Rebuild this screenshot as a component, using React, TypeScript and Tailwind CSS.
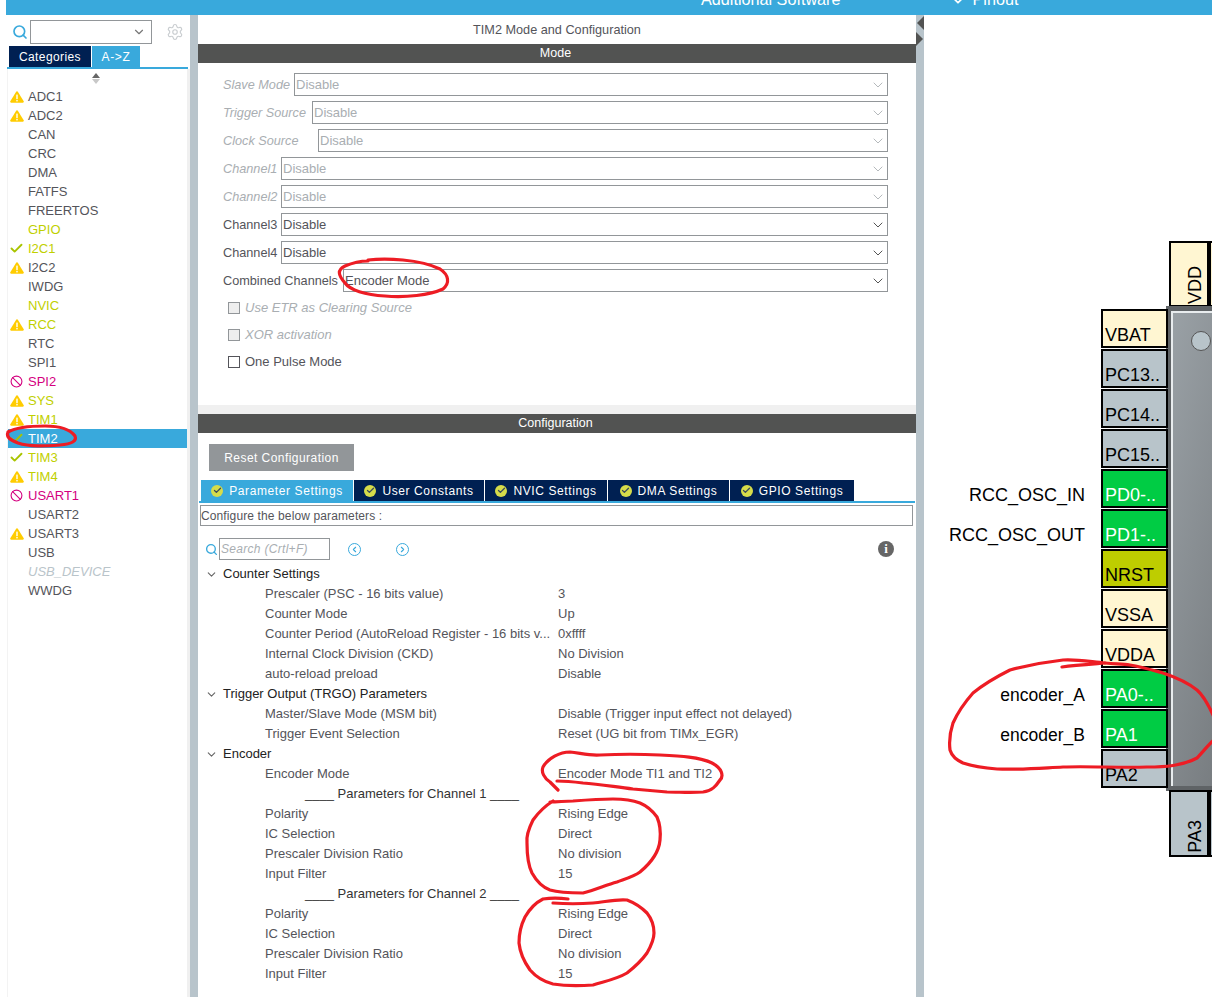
import React from 'react';
import { ChevronDown, ChevronLeft, ChevronRight, Search, Settings, Ban, Check } from 'lucide-react';

type Status = 'warn' | 'ok' | 'ban' | null;

const peripherals: { name: string; status: Status; color: string }[] = [
  { name: 'ADC1', status: 'warn', color: 'text-[#54545a]' },
  { name: 'ADC2', status: 'warn', color: 'text-[#54545a]' },
  { name: 'CAN', status: null, color: 'text-[#54545a]' },
  { name: 'CRC', status: null, color: 'text-[#54545a]' },
  { name: 'DMA', status: null, color: 'text-[#54545a]' },
  { name: 'FATFS', status: null, color: 'text-[#54545a]' },
  { name: 'FREERTOS', status: null, color: 'text-[#54545a]' },
  { name: 'GPIO', status: null, color: 'text-[#bfd000]' },
  { name: 'I2C1', status: 'ok', color: 'text-[#bfd000]' },
  { name: 'I2C2', status: 'warn', color: 'text-[#54545a]' },
  { name: 'IWDG', status: null, color: 'text-[#54545a]' },
  { name: 'NVIC', status: null, color: 'text-[#bfd000]' },
  { name: 'RCC', status: 'warn', color: 'text-[#bfd000]' },
  { name: 'RTC', status: null, color: 'text-[#54545a]' },
  { name: 'SPI1', status: null, color: 'text-[#54545a]' },
  { name: 'SPI2', status: 'ban', color: 'text-[#d4007f]' },
  { name: 'SYS', status: 'warn', color: 'text-[#bfd000]' },
  { name: 'TIM1', status: 'warn', color: 'text-[#bfd000]' },
  { name: 'TIM2', status: 'ok', color: 'text-white' },
  { name: 'TIM3', status: 'ok', color: 'text-[#bfd000]' },
  { name: 'TIM4', status: 'warn', color: 'text-[#bfd000]' },
  { name: 'USART1', status: 'ban', color: 'text-[#d4007f]' },
  { name: 'USART2', status: null, color: 'text-[#54545a]' },
  { name: 'USART3', status: 'warn', color: 'text-[#54545a]' },
  { name: 'USB', status: null, color: 'text-[#54545a]' },
  { name: 'USB_DEVICE', status: null, color: 'text-[#b9c4ca] italic' },
  { name: 'WWDG', status: null, color: 'text-[#54545a]' },
];

const modeRows = [
  { label: 'Slave Mode', value: 'Disable', width: 'w-[71px]', off: true },
  { label: 'Trigger Source', value: 'Disable', width: 'w-[89px]', off: true },
  { label: 'Clock Source', value: 'Disable', width: 'w-[95px]', off: true },
  { label: 'Channel1', value: 'Disable', width: 'w-[58px]', off: true },
  { label: 'Channel2', value: 'Disable', width: 'w-[58px]', off: true },
  { label: 'Channel3', value: 'Disable', width: 'w-[58px]', off: false },
  { label: 'Channel4', value: 'Disable', width: 'w-[58px]', off: false },
  { label: 'Combined Channels', value: 'Encoder Mode', width: 'w-[120px]', off: false },
];

const tabs = [
  { label: 'Parameter Settings', width: 'w-[152px]', active: true },
  { label: 'User Constants', width: 'w-[130px]', active: false },
  { label: 'NVIC Settings', width: 'w-[122px]', active: false },
  { label: 'DMA Settings', width: 'w-[121px]', active: false },
  { label: 'GPIO Settings', width: 'w-[124px]', active: false },
];

const tree: { kind: 'group' | 'item' | 'sub'; label: string; value?: string }[] = [
  { kind: 'group', label: 'Counter Settings' },
  { kind: 'item', label: 'Prescaler (PSC - 16 bits value)', value: '3' },
  { kind: 'item', label: 'Counter Mode', value: 'Up' },
  { kind: 'item', label: 'Counter Period (AutoReload Register - 16 bits v...', value: '0xffff' },
  { kind: 'item', label: 'Internal Clock Division (CKD)', value: 'No Division' },
  { kind: 'item', label: 'auto-reload preload', value: 'Disable' },
  { kind: 'group', label: 'Trigger Output (TRGO) Parameters' },
  { kind: 'item', label: 'Master/Slave Mode (MSM bit)', value: 'Disable (Trigger input effect not delayed)' },
  { kind: 'item', label: 'Trigger Event Selection', value: 'Reset (UG bit from TIMx_EGR)' },
  { kind: 'group', label: 'Encoder' },
  { kind: 'item', label: 'Encoder Mode', value: 'Encoder Mode TI1 and TI2' },
  { kind: 'sub', label: '____ Parameters for Channel 1 ____' },
  { kind: 'item', label: 'Polarity', value: 'Rising Edge' },
  { kind: 'item', label: 'IC Selection', value: 'Direct' },
  { kind: 'item', label: 'Prescaler Division Ratio', value: 'No division' },
  { kind: 'item', label: 'Input Filter', value: '15' },
  { kind: 'sub', label: '____ Parameters for Channel 2 ____' },
  { kind: 'item', label: 'Polarity', value: 'Rising Edge' },
  { kind: 'item', label: 'IC Selection', value: 'Direct' },
  { kind: 'item', label: 'Prescaler Division Ratio', value: 'No division' },
  { kind: 'item', label: 'Input Filter', value: '15' },
];

const pins = [
  { label: 'VBAT', bg: 'bg-[#fff6d2]', text: 'text-black', net: '', netClass: '' },
  { label: 'PC13..', bg: 'bg-[#b8c4ca]', text: 'text-black', net: '', netClass: '' },
  { label: 'PC14..', bg: 'bg-[#b8c4ca]', text: 'text-black', net: '', netClass: '' },
  { label: 'PC15..', bg: 'bg-[#b8c4ca]', text: 'text-black', net: '', netClass: '' },
  { label: 'PD0-..', bg: 'bg-[#00cc44]', text: 'text-white', net: 'RCC_OSC_IN', netClass: 'text-[18px] -mt-px' },
  { label: 'PD1-..', bg: 'bg-[#00cc44]', text: 'text-white', net: 'RCC_OSC_OUT', netClass: 'text-[18px] -mt-px' },
  { label: 'NRST', bg: 'bg-[#becd00]', text: 'text-black', net: '', netClass: '' },
  { label: 'VSSA', bg: 'bg-[#fff6d2]', text: 'text-black', net: '', netClass: '' },
  { label: 'VDDA', bg: 'bg-[#fff6d2]', text: 'text-black', net: '', netClass: '' },
  { label: 'PA0-..', bg: 'bg-[#00cc44]', text: 'text-white', net: 'encoder_A', netClass: 'text-[17.5px]' },
  { label: 'PA1', bg: 'bg-[#00cc44]', text: 'text-white', net: 'encoder_B', netClass: 'text-[17.5px]' },
  { label: 'PA2', bg: 'bg-[#b8c4ca]', text: 'text-black', net: '', netClass: '' },
];

const WarnIcon = () => (
  <svg width="14" height="12" viewBox="0 0 14 12">
    <path d="M7 .3c.5 0 .8.3 1 .6l5.7 9.4c.4.7 0 1.4-.8 1.4H1.1c-.8 0-1.2-.7-.8-1.4L6 .9c.2-.3.5-.6 1-.6z" fill="#ffcc00" />
    <rect x="6.3" y="3.6" width="1.4" height="4.6" fill="#fff" />
    <rect x="6.3" y="9" width="1.4" height="1.4" fill="#fff" />
  </svg>
);

const StatusIcon = ({ status }: { status: Status }) => {
  if (status === 'warn') return <WarnIcon />;
  if (status === 'ok') return <Check size={15} strokeWidth={3} className="text-[#a9c400]" />;
  if (status === 'ban') return <Ban size={13} strokeWidth={2} className="text-[#d4007f]" />;
  return null;
};

const TabCheck = () => (
  <span className="w-[12px] h-[12px] rounded-full bg-[#d6dc4a] flex items-center justify-center shrink-0">
    <Check size={9} strokeWidth={3.5} className="text-[#3a4a5a]" />
  </span>
);

const Sidebar = () => (
  <aside className="w-[184px] shrink-0 bg-white flex flex-col h-full">
    <div className="h-[31px] flex items-center pt-[2px]">
      <Search size={16} strokeWidth={2.5} className="ml-[6px] text-[#39a9dc] shrink-0" />
      <div className="ml-[2px] w-[122px] h-[24px] border border-[#929699] flex items-center justify-end pr-[5px]">
        <ChevronDown size={14} className="text-[#777]" />
      </div>
      <Settings size={18} strokeWidth={1.5} className="ml-[14px] text-[#c9cdd0]" />
    </div>
    <div className="flex h-[21px] pl-[3px] gap-px">
      <div className="w-[82px] bg-[#002052] text-white text-[12px] tracking-[0.4px] flex items-center justify-center">Categories</div>
      <div className="w-[48px] bg-[#39a9dc] text-white text-[12px] tracking-[0.7px] flex items-center justify-center">{'A->Z'}</div>
    </div>
    <div className="h-[2px] ml-[1px] mr-[2px] bg-[#39a9dc]" />
    <div className="flex-1 ml-px mr-0 border-l border-l-[#f3f3f3] border-r-[3px] border-r-[#f0f0f0] flex flex-col min-h-0">
      <div className="h-[16px] flex flex-col items-center justify-center gap-[1px] pr-[3px] pt-[2px]">
        <span className="w-0 h-0 border-x-[4px] border-x-transparent border-b-[5px] border-b-[#666]" />
        <span className="w-0 h-0 border-x-[4px] border-x-transparent border-t-[5px] border-t-[#c8c8c8]" />
      </div>
      <ul className="pt-[2px]">
        {peripherals.map((p) => (
          <li
            key={p.name}
            className={`h-[19px] flex items-center text-[13px] ${p.color} ${p.name === 'TIM2' ? 'bg-[#39a9dc]' : ''}`}
          >
            <span className="w-[20px] pr-[3px] flex justify-center shrink-0">
              <StatusIcon status={p.status} />
            </span>
            <span>{p.name}</span>
          </li>
        ))}
      </ul>
    </div>
  </aside>
);

const ModeSection = () => (
  <section className="h-[342px] pt-[10px] pl-[25px] pr-[28px] text-[13px]">
    <div className="flex flex-col gap-[5px]">
      {modeRows.map((r) => (
        <div key={r.label} className="flex items-center h-[23px]">
          <span className={`${r.width} shrink-0 whitespace-nowrap pt-[2px] text-[12.7px] ${r.off ? 'italic text-[#a9aeb2]' : 'text-[#54545a]'}`}>{r.label}</span>
          <div className="flex-1 h-[23px] border border-[#929699] pl-[1px] flex items-center justify-between pr-[1px]">
            <span className={r.off ? 'text-[#a9aeb2]' : 'text-[#54545a]'}>{r.value}</span>
            <ChevronDown size={16} strokeWidth={1.5} className={r.off ? 'text-[#b5b9bc]' : 'text-[#555]'} />
          </div>
        </div>
      ))}
    </div>
    <div className="pl-[5px] pt-[2px] flex flex-col">
      <label className="h-[27px] flex items-center gap-[5px] italic text-[#a9aeb2]">
        <span className="w-[12px] h-[12px] border border-[#929699] bg-[#eeeeee]" />Use ETR as Clearing Source
      </label>
      <label className="h-[27px] flex items-center gap-[5px] italic text-[#a9aeb2]">
        <span className="w-[12px] h-[12px] border border-[#929699] bg-[#eeeeee]" />XOR activation
      </label>
      <label className="h-[27px] flex items-center gap-[5px] text-[#54545a]">
        <span className="w-[12px] h-[12px] border border-[#54545a] bg-white" />One Pulse Mode
      </label>
    </div>
  </section>
);

const ConfigSection = () => (
  <section className="flex-1 min-h-0 overflow-hidden text-[13px]">
    <div className="pt-[11px] pl-[11px]">
      <button className="w-[145px] h-[27px] bg-[#929699] text-white text-[12px] tracking-[0.45px]">Reset Configuration</button>
    </div>
    <div className="flex mt-[9px] pl-[3px] gap-px h-[21px]">
      {tabs.map((t) => (
        <div
          key={t.label}
          className={`${t.width} ${t.active ? 'bg-[#39a9dc]' : 'bg-[#002052]'} text-white text-[12px] tracking-[0.6px] flex items-center justify-center gap-[6px]`}
        >
          <TabCheck />
          {t.label}
        </div>
      ))}
    </div>
    <div className="h-[2px] ml-px mr-px bg-[#39a9dc]" />
    <div className="mt-[2px] ml-[2px] mr-[3px] h-[21px] border border-[#929699] flex items-center text-[12px] tracking-[0.12px] text-[#54545a]">
      Configure the below parameters :
    </div>
    <div className="mt-[12px] h-[22px] flex items-center pl-[7px]">
      <Search size={13} strokeWidth={2.5} className="text-[#39a9dc] shrink-0" />
      <div className="w-[111px] h-[22px] ml-px border border-[#929699] italic text-[#a9aeb2] pl-[1px] flex items-center text-[12px] tracking-[0.3px]">Search (Crtl+F)</div>
      <span className="ml-[18px] w-[13px] h-[13px] rounded-full border border-[#39a9dc] flex items-center justify-center">
        <ChevronLeft size={9} strokeWidth={3} className="text-[#39a9dc]" />
      </span>
      <span className="ml-[35px] w-[13px] h-[13px] rounded-full border border-[#39a9dc] flex items-center justify-center">
        <ChevronRight size={9} strokeWidth={3} className="text-[#39a9dc]" />
      </span>
      <span className="ml-[469px] w-[16px] h-[16px] rounded-full bg-[#666] text-white text-[13px] font-bold flex items-center justify-center font-['Liberation_Serif',serif]">i</span>
    </div>
    <div className="mt-[4px]">
      {tree.map((row, i) => (
        <div key={i} className="h-[20px] flex items-center whitespace-nowrap">
          {row.kind === 'group' && (
            <>
              <ChevronDown size={13} className="ml-[7px] w-[13px] text-[#666] shrink-0" />
              <span className="ml-[5px] text-[#222]">{row.label}</span>
            </>
          )}
          {row.kind === 'item' && (
            <>
              <span className="ml-[67px] w-[293px] shrink-0 text-[#54545a]">{row.label}</span>
              <span className="text-[#54545a]">{row.value}</span>
            </>
          )}
          {row.kind === 'sub' && <span className="ml-[107px] text-[#333]">{row.label}</span>}
        </div>
      ))}
    </div>
  </section>
);

const PinCanvas = () => (
  <div className="relative flex-1 bg-white overflow-hidden font-['Liberation_Sans',sans-serif] text-[18px] leading-none">
    {/* top pins */}
    <div className="absolute left-[245px] top-[226px] w-[40px] h-[66px] border-[2px] border-black bg-[#fff6d2] flex justify-end items-end pb-[1px] pr-[3px]">
      <span className="[writing-mode:vertical-rl] rotate-180 text-black">VDD</span>
    </div>
    <div className="absolute left-[285px] top-[226px] w-[40px] h-[66px] border-[2px] border-black bg-[#fff6d2]" />
    {/* chip body */}
    <div className="absolute left-[242px] top-[291px] w-[120px] h-[485px] border-[5px] border-[#5f6366] bg-gradient-to-br from-[#9aa1a6] to-[#6a6e71]">
      <div className="h-full border-l-[2px] border-t-[2px] border-[#e8ecee]">
        <div className="ml-[18px] mt-[18px] w-[20px] h-[20px] rounded-full bg-[#b8c4ca] border border-[#555]" />
      </div>
    </div>
    {/* left pins */}
    {pins.map((p, i) => (
      <div
        key={p.label}
        style={{ top: 294 + i * 40 }}
        className={`absolute left-[177px] w-[67px] h-[39px] border-[2px] border-black ${p.bg} ${p.text} flex items-end pl-[2px] pb-[2px] whitespace-nowrap`}
      >
        {p.label}
      </div>
    ))}
    {pins.map((p, i) =>
      p.net ? (
        <div
          key={p.net}
          style={{ top: 294 + i * 40 + 18 }}
          className={`absolute right-[127px] text-black ${p.netClass} whitespace-nowrap`}
        >
          {p.net}
        </div>
      ) : null,
    )}
    {/* bottom pins */}
    <div className="absolute left-[245px] top-[775px] w-[40px] h-[67px] border-[2px] border-black bg-[#b8c4ca] flex justify-end items-end pb-[2px] pr-[3px]">
      <span className="[writing-mode:vertical-rl] rotate-180 text-black">PA3</span>
    </div>
    <div className="absolute left-[285px] top-[775px] w-[40px] h-[67px] border-[2px] border-black bg-[#b8c4ca]" />
  </div>
);

// hand drawn red marks on top of the screenshot
const Scribbles = () => (
  <svg className="absolute inset-0 pointer-events-none" width="1212" height="997" fill="none" stroke="#ed1c24" strokeWidth="3.2" strokeLinecap="round" strokeLinejoin="round">
    <path d="M8 432C15 428 28 426 45 426C60 426 70 429 75 436C77 441 72 444 60 445C45 446 30 447 18 443C10 440 6 437 8 432" />
    <path d="M368 260C385 258 420 259 440 269C449 275 450 283 443 289C430 295 405 298 385 296C365 295 350 290 345 283C338 275 337 270 345 266C352 263 360 261 368 261" />
    <path d="M558 790L550 782C544 778 541 772 543 767C548 758 560 752 570 752C580 753 590 756 600 755C620 754 640 754 660 755C680 756 700 757 712 763C722 768 724 776 720 780C716 786 712 791 703 792C690 793 680 792 667 792C655 791 645 790 633 789C615 787 600 784 583 783C575 782 565 781 557 781" />
    <path d="M553 801C545 806 538 813 533 820C528 830 526 836 527 843C527 855 528 865 532 873C537 882 542 887 550 890C560 893 572 893 583 893C595 890 606 885 617 882C625 879 633 877 640 872C652 862 659 852 660 840C661 830 660 824 657 817C652 810 647 806 640 803C632 800 622 799 613 799C600 799 586 800 573 801C565 801 558 802 550 802" />
    <path d="M568 899C560 898 550 898 543 899C535 903 529 910 525 917C521 925 519 934 519 943C520 953 525 963 530 970C537 978 545 982 553 984C565 986 580 986 593 985C606 981 617 979 627 973C636 966 642 960 647 953C651 946 654 940 654 933C654 925 651 918 647 913C641 907 635 903 627 900C615 899 605 902 593 903C580 904 566 904 553 903" />
    <path d="M1062 667C1075 665 1092 664 1105 663C1092 662 1077 659 1063 660C1045 662 1025 666 1010 670C998 676 984 684 973 693C965 702 958 712 953 723C950 732 949 742 950 750C952 757 957 760 963 763C975 767 985 768 997 769C1020 770 1042 768 1063 767C1090 766 1120 768 1147 767C1165 767 1182 766 1197 758C1203 752 1208 745 1214 740" />
    <path d="M1105 663C1115 664 1122 664 1130 665C1142 667 1152 670 1163 673C1175 677 1187 682 1197 690C1204 696 1209 706 1214 717" />
  </svg>
);

export default function App() {
  return (
    <div className="relative w-[1212px] h-[997px] overflow-hidden bg-white font-['Liberation_Sans',sans-serif] flex flex-col">
      <header className="h-[15px] ml-[6px] shrink-0 bg-[#39a9dc] overflow-hidden flex items-end text-white text-[16.2px] leading-[20px]">
        <div className="flex pb-[9px] translate-y-[3px]">
          <span className="ml-[695px] whitespace-nowrap">Additional Software</span>
          <ChevronDown size={14} strokeWidth={3} className="ml-[111px] mt-[5px]" />
          <span className="ml-[7px]">Pinout</span>
        </div>
      </header>
      <div className="flex flex-1 min-h-0 pl-[6px]">
        <Sidebar />
        <div className="w-[8px] shrink-0 bg-[#b8c4cb]" />
        <main className="w-[718px] shrink-0 flex flex-col">
          <div className="h-[29px] pt-[2px] flex items-center justify-center text-[12.7px] text-[#54545a]">TIM2 Mode and Configuration</div>
          <div className="h-[19px] bg-[#525352] text-white text-[12.5px] flex items-center justify-center pr-[3px]">Mode</div>
          <ModeSection />
          <div className="h-[9px] bg-[#f0f0f0]" />
          <div className="h-[19px] bg-[#525352] text-white text-[12.5px] flex items-center justify-center pr-[3px]">Configuration</div>
          <ConfigSection />
        </main>
        <div className="w-[8px] shrink-0 bg-[#b8c4cb] flex flex-col items-end pt-px">
          <span className="w-0 h-0 border-y-[7px] border-y-transparent border-r-[7px] border-r-[#525352]" />
          <span className="mt-[2px] mr-px w-0 h-0 border-y-[7px] border-y-transparent border-l-[7px] border-l-[#525352]" />
        </div>
        <PinCanvas />
      </div>
      <Scribbles />
    </div>
  );
}
